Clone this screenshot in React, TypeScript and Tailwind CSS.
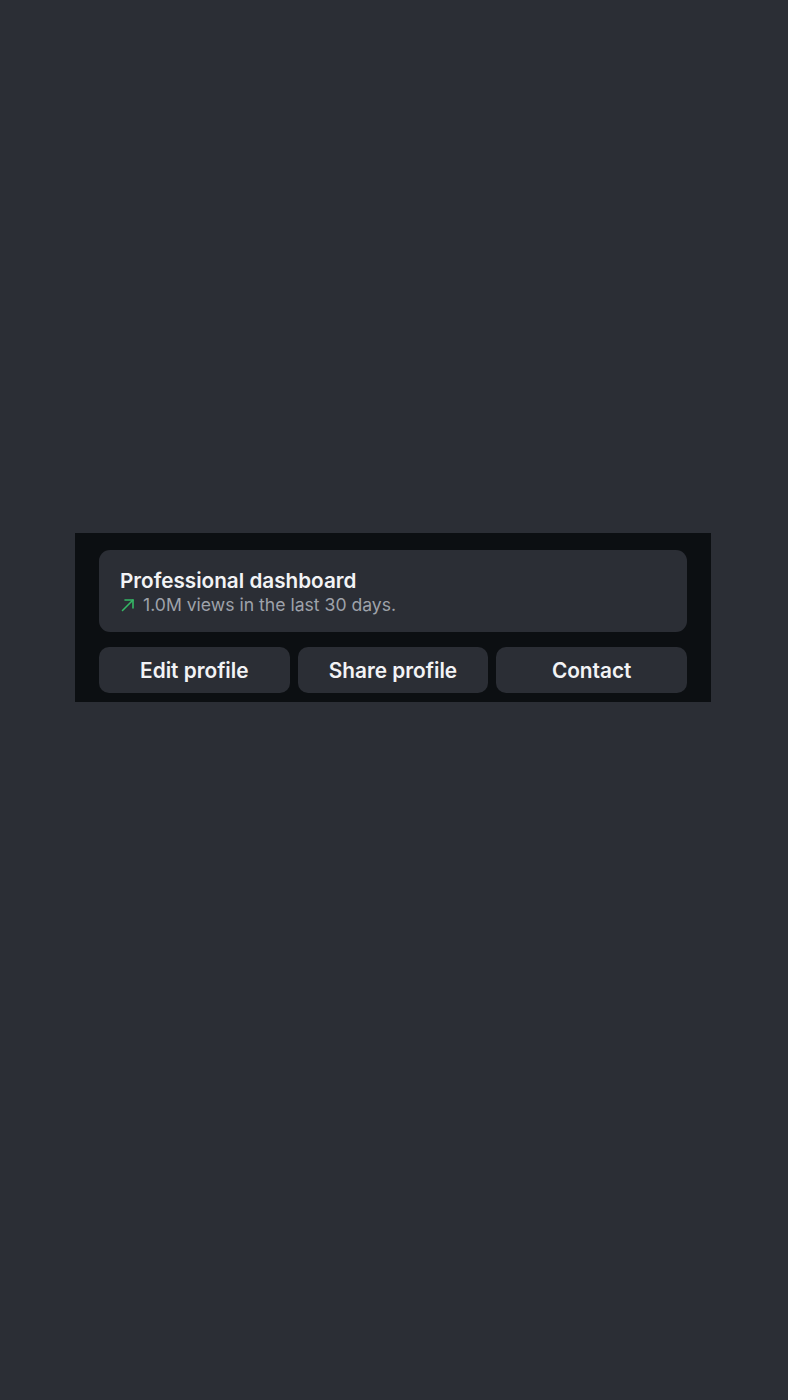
import React from "react";

export default function App() {
  return (
    <div
      className="min-h-[1400px] w-full bg-[#2b2e35] pt-[533px]"
      style={{ fontFamily: "Inter, 'Noto Sans', sans-serif" }}
    >
      <div className="ml-[75px] w-[636px] bg-[#0c0f12] px-[24px] pt-[17px] pb-[9px]">
        <div className="flex h-[82px] flex-col justify-center rounded-[11px] bg-[#2b2e35] pl-[21px] pt-[2px]">
          <div className="text-[20.7px] font-semibold leading-[24px] text-[#f2f3f5]">
            Professional dashboard
          </div>
          <div className="mt-[1px] flex items-center text-[17.6px] leading-[22px] text-[#9ea2aa]">
            <svg
              width="16"
              height="16"
              viewBox="0 0 16 16"
              fill="none"
              stroke="#35b866"
              strokeWidth="1.6"
              strokeLinecap="round"
              strokeLinejoin="round"
              className="mr-[7px]"
            >
              <path d="M2.5 13.5 L13 3" />
              <path d="M5 3 H13 V11" />
            </svg>
            <span>1.0M views in the last 30 days.</span>
          </div>
        </div>
        <div className="mt-[15px] grid grid-cols-3 gap-[8px]">
          {["Edit profile", "Share profile", "Contact"].map((t) => (
            <div
              key={t}
              className="flex h-[46px] items-center justify-center rounded-[10px] bg-[#2b2e35] pt-[1px] text-[20.8px] font-semibold text-[#f2f3f5]"
            >
              {t}
            </div>
          ))}
        </div>
      </div>
    </div>
  );
}
